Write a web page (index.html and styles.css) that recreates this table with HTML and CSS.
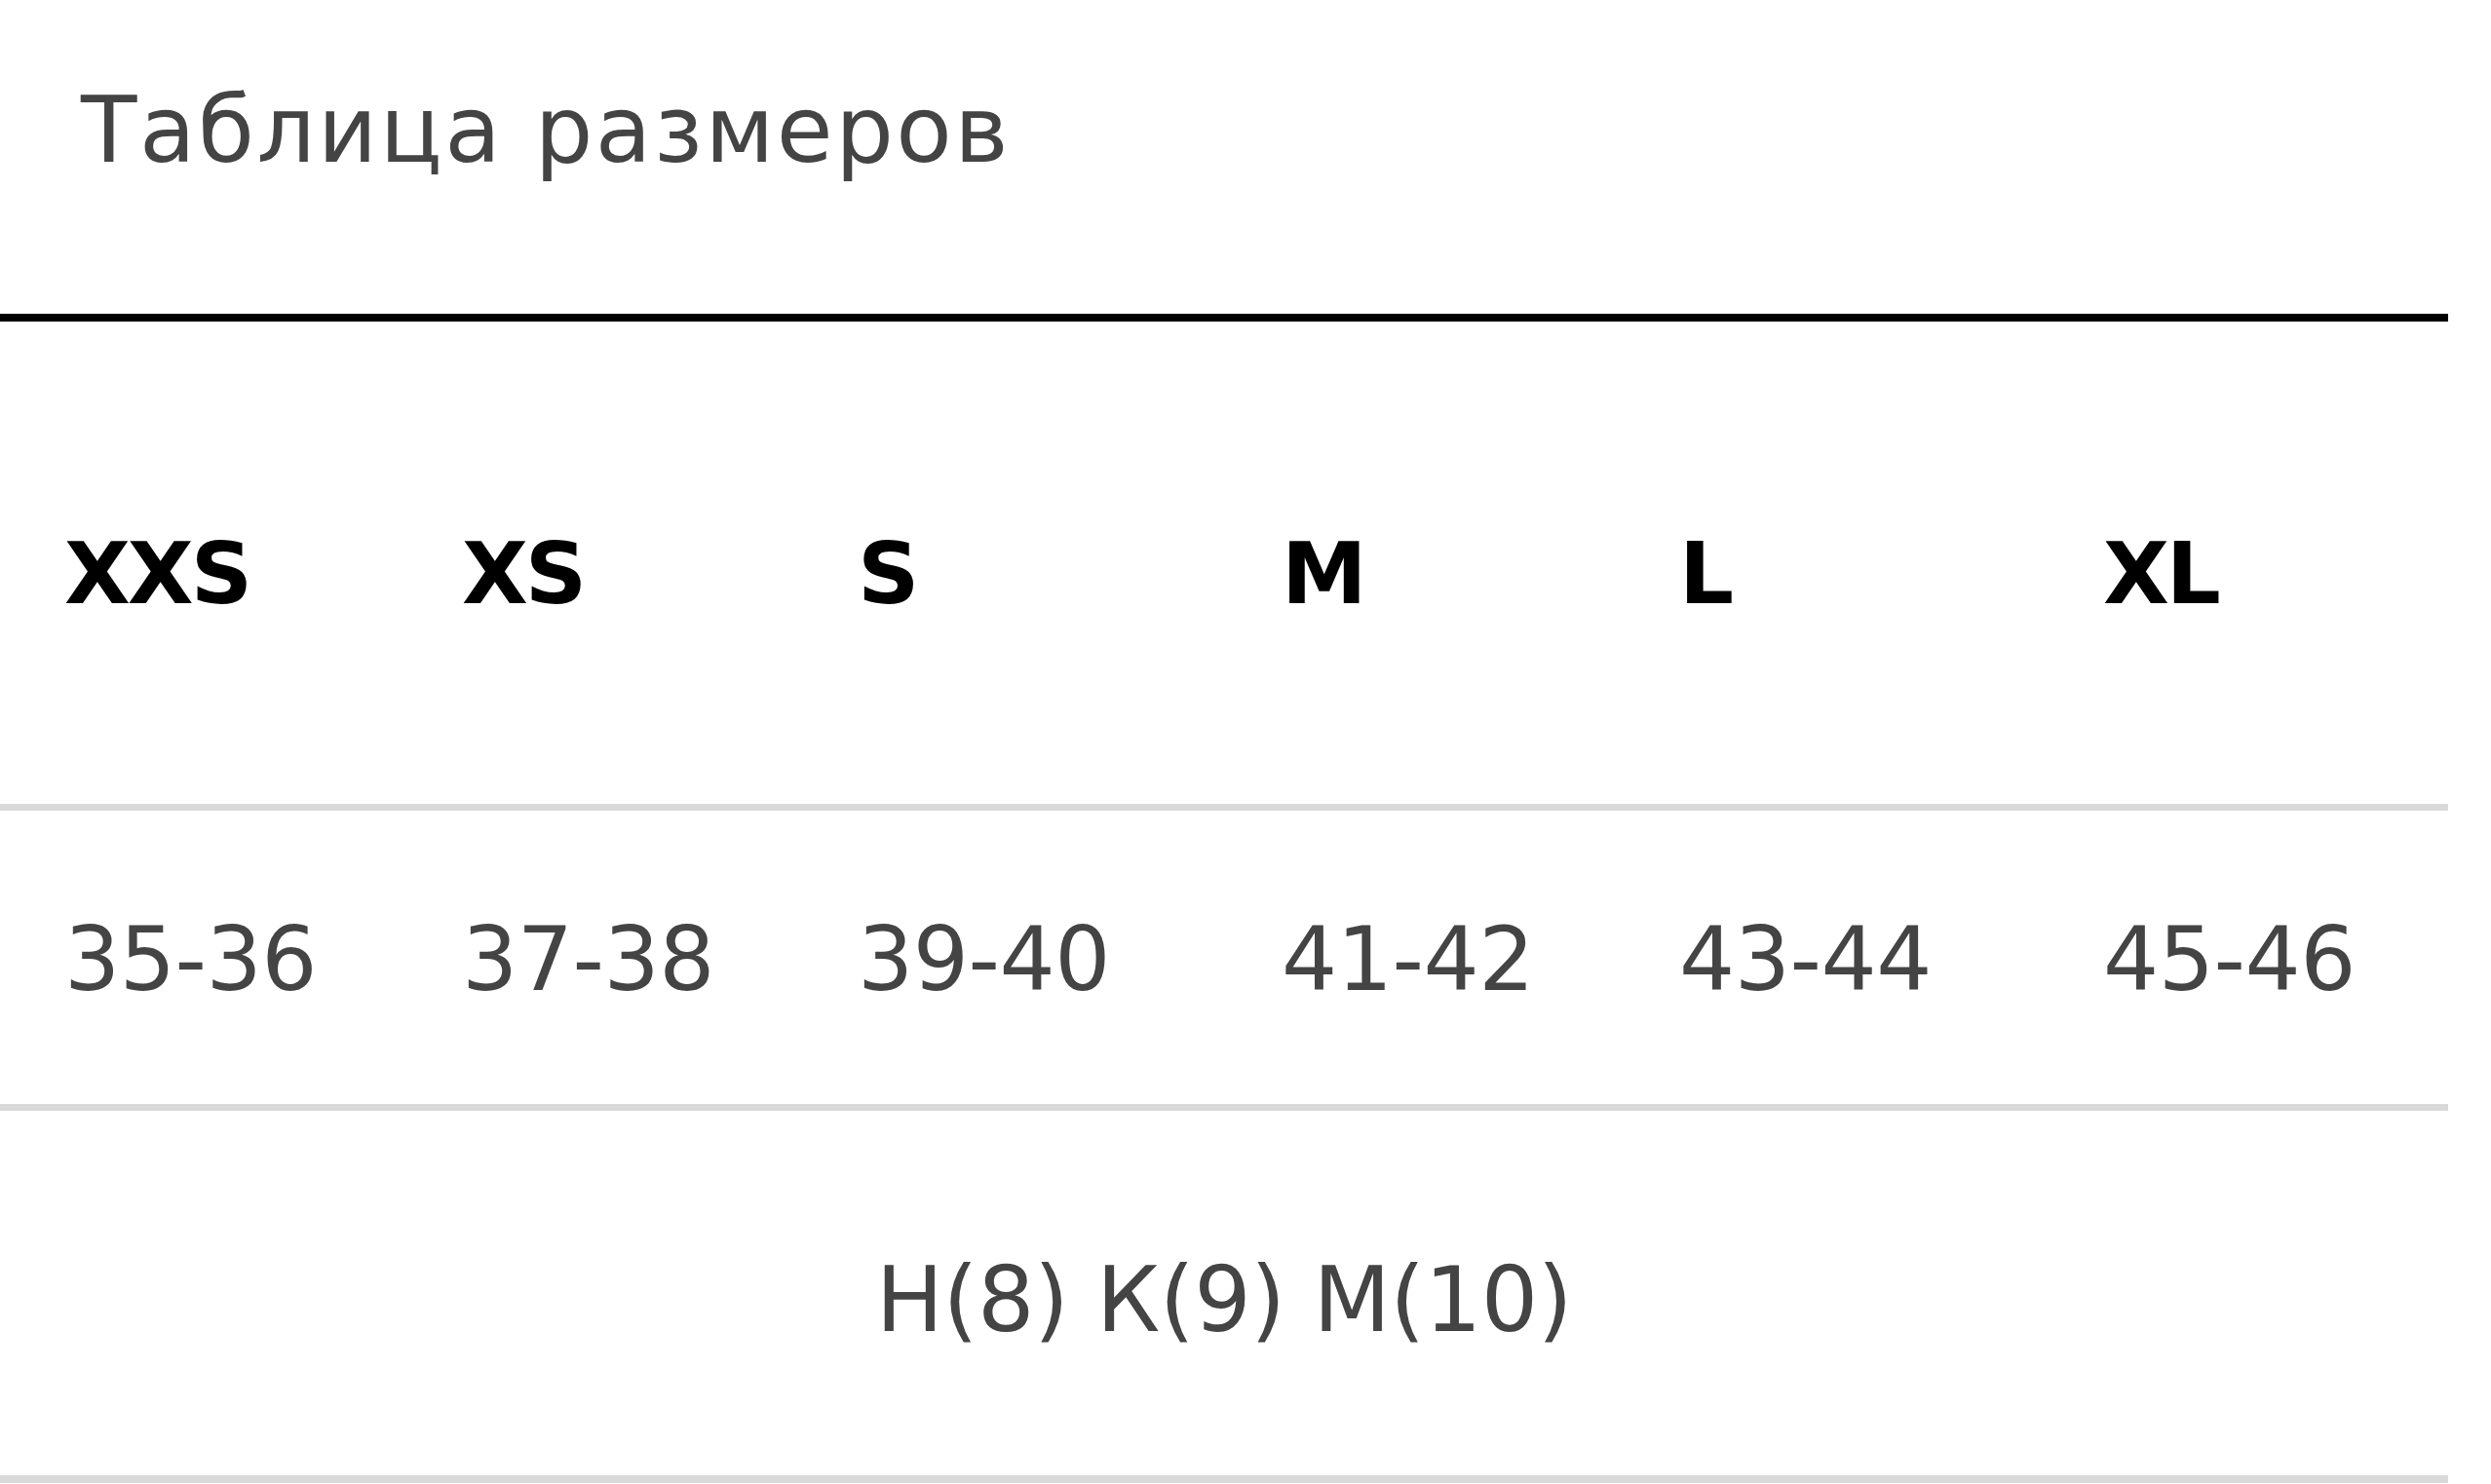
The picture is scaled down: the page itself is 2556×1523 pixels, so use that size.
FILE: index.html
```html
<!DOCTYPE html>
<html lang="ru">
<head>
<meta charset="utf-8">
<title>Таблица размеров</title>
<link rel="stylesheet" href="styles.css">
</head>
<body>
<div class="sizes">
  <div class="sizes__head">
    <h2 class="sizes__title">Таблица размеров</h2>
  </div>
  <div class="sizes__row sizes__row--labels">
    <div class="sizes__cell">XXS</div>
    <div class="sizes__cell">XS</div>
    <div class="sizes__cell">S</div>
    <div class="sizes__cell">M</div>
    <div class="sizes__cell">L</div>
    <div class="sizes__cell">XL</div>
  </div>
  <div class="sizes__row sizes__row--values">
    <div class="sizes__cell">35-36</div>
    <div class="sizes__cell">37-38</div>
    <div class="sizes__cell">39-40</div>
    <div class="sizes__cell">41-42</div>
    <div class="sizes__cell">43-44</div>
    <div class="sizes__cell">45-46</div>
  </div>
  <div class="sizes__foot">Н(8) К(9) М(10)</div>
</div>
</body>
</html>
```

FILE: styles.css
```css
html, body {
  margin: 0;
  padding: 0;
  background: #ffffff;
}

.sizes {
  width: 2512px;
  font-family: "DejaVu Sans", "Noto Sans", sans-serif;
  color: #444444;
}

.sizes__head {
  border-bottom: 8px solid #000000;
  display: flex;
  align-items: center;
  padding-left: 83px;
  box-sizing: border-box;
  height: 330px;
}

.sizes__title {
  margin: 0 0 56px 0;
  font-weight: 400;
  font-size: 94px;
  letter-spacing: 2.5px;
  color: #444444;
}

.sizes__row {
  display: grid;
  grid-template-columns: 408px 406px 435px 408px 435px 420px;
  align-items: center;
  border-bottom: 7px solid #d9d9d9;
  box-sizing: border-box;
}

.sizes__row--labels {
  height: 502px;
  font-weight: 700;
  color: #000000;
  font-size: 88px;
  letter-spacing: -3px;
  padding-top: 22px;
}

.sizes__row--values {
  height: 308px;
  font-size: 90px;
  letter-spacing: -0.5px;
  color: #444444;
  padding-top: 4px;
}

.sizes__cell {
  padding-left: 66px;
}

.sizes__foot {
  height: 382px;
  box-sizing: border-box;
  border-bottom: 8px solid #d9d9d9;
  display: flex;
  align-items: center;
  justify-content: center;
  font-size: 92px;
  letter-spacing: -0.5px;
  color: #444444;
  padding-top: 14px;
}
```
